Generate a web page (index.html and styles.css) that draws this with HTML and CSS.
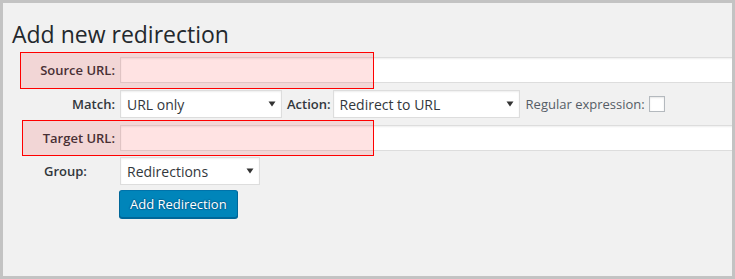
FILE: index.html
```html
<!DOCTYPE html>
<html>
<head>
<meta charset="utf-8">
<link rel="stylesheet" href="styles.css">
</head>
<body>
<div class="frame">
  <h2 class="title">Add new redirection</h2>
  <div class="form">
    <div class="row row-source">
      <label class="lbl">Source URL:</label>
      <input class="text" type="text">
    </div>
    <div class="row row-match">
      <label class="lbl">Match:</label>
      <div class="sel sel-match"><span class="sel-text">URL only</span><svg class="arrow" width="8" height="6" viewBox="0 0 8 6"><path d="M0.5 0.5 H7.5 L4 5.5 Z" fill="#333"/></svg></div>
      <label class="lbl-inline">Action:</label>
      <div class="sel sel-action"><span class="sel-text">Redirect to URL</span><svg class="arrow" width="8" height="6" viewBox="0 0 8 6"><path d="M0.5 0.5 H7.5 L4 5.5 Z" fill="#333"/></svg></div>
      <span class="regex">Regular expression:</span>
      <span class="check"></span>
    </div>
    <div class="row row-target">
      <label class="lbl">Target URL:</label>
      <input class="text" type="text">
    </div>
    <div class="row row-group">
      <label class="lbl lbl-left">Group:</label>
      <div class="sel sel-group"><span class="sel-text">Redirections</span><svg class="arrow" width="8" height="6" viewBox="0 0 8 6"><path d="M0.5 0.5 H7.5 L4 5.5 Z" fill="#333"/></svg></div>
    </div>
    <div class="row row-button">
      <span class="lbl"></span>
      <button class="btn">Add Redirection</button>
    </div>
  </div>
  <div class="mark mark-source"></div>
  <div class="mark mark-target"></div>
</div>
</body>
</html>
```
FILE: styles.css
```css
* { box-sizing: border-box; }
html, body { margin: 0; padding: 0; background: #fff; }
body { font-family: "Open Sans", "Liberation Sans", sans-serif; }

.frame {
  position: relative;
  width: 735px;
  height: 279px;
  border: 3px solid #c3c3c3;
  background: #f1f1f1;
  overflow: hidden;
  padding: 17px 0 0 9px;
}

.title {
  margin: 0;
  font-size: 23px;
  line-height: 29px;
  font-weight: 400;
  color: #23282d;
}

.form {
  margin-left: -9px;
  display: flex;
  flex-direction: column;
}

.row {
  display: flex;
  align-items: center;
}

.row-source { margin-top: 8px; height: 26px; }
.row-match { margin-top: 7px; height: 28px; }
.row-target { margin-top: 7px; height: 26px; }
.row-group { margin-top: 6px; height: 28px; }
.row-button { margin-top: 5px; height: 29px; align-items: flex-start; }

.lbl {
  flex: 0 0 112px;
  width: 112px;
  margin-right: 5px;
  text-align: right;
  font-size: 13px;
  font-weight: 600;
  color: #32373c;
}

.lbl-left {
  text-align: left;
  padding-left: 41px;
}

.lbl-inline {
  margin: 0 2px 0 5px;
  font-size: 13px;
  font-weight: 600;
  color: #32373c;
}

.text {
  flex: 0 0 660px;
  width: 660px;
  height: 26px;
  margin: 0;
  border: 1px solid #ddd;
  background: #fff;
  box-shadow: inset 0 1px 2px rgba(0,0,0,.07);
  padding: 0 6px;
  font-family: inherit;
  font-size: 14px;
}

.sel {
  position: relative;
  height: 28px;
  border: 1px solid #ddd;
  background: #fff;
  box-shadow: inset 0 1px 2px rgba(0,0,0,.07);
  display: flex;
  align-items: center;
  padding-left: 6px;
  font-size: 14px;
  color: #32373c;
}

.sel-match { width: 162px; }
.sel-action { width: 187px; }
.sel-group { width: 140px; }

.arrow {
  position: absolute;
  right: 5px;
  top: 10px;
}

.regex {
  margin: 0 4px 0 6px;
  font-size: 13px;
  color: #555d66;
}

.check {
  width: 16px;
  height: 16px;
  border: 1px solid #b4b9be;
  background: #fff;
  box-shadow: inset 0 1px 2px rgba(0,0,0,.1);
}

.btn {
  margin: 0 0 0 -1px;
  height: 28px;
  padding: 0 10px 1px;
  border: 1px solid;
  border-color: #0073aa #006799 #006799;
  border-radius: 3px;
  background: #0085ba;
  box-shadow: 0 1px 0 #006799;
  color: #fff;
  text-shadow: 0 -1px 1px #006799, 1px 0 1px #006799, 0 1px 1px #006799, -1px 0 1px #006799;
  font-family: inherit;
  font-size: 13px;
  line-height: 26px;
}

.mark {
  position: absolute;
  border: 1px solid #f00;
  background: rgba(255, 0, 0, 0.11);
}

.mark-source { left: 17px; top: 49px; width: 354px; height: 37px; }
.mark-target { left: 19px; top: 117px; width: 352px; height: 36px; }
```
